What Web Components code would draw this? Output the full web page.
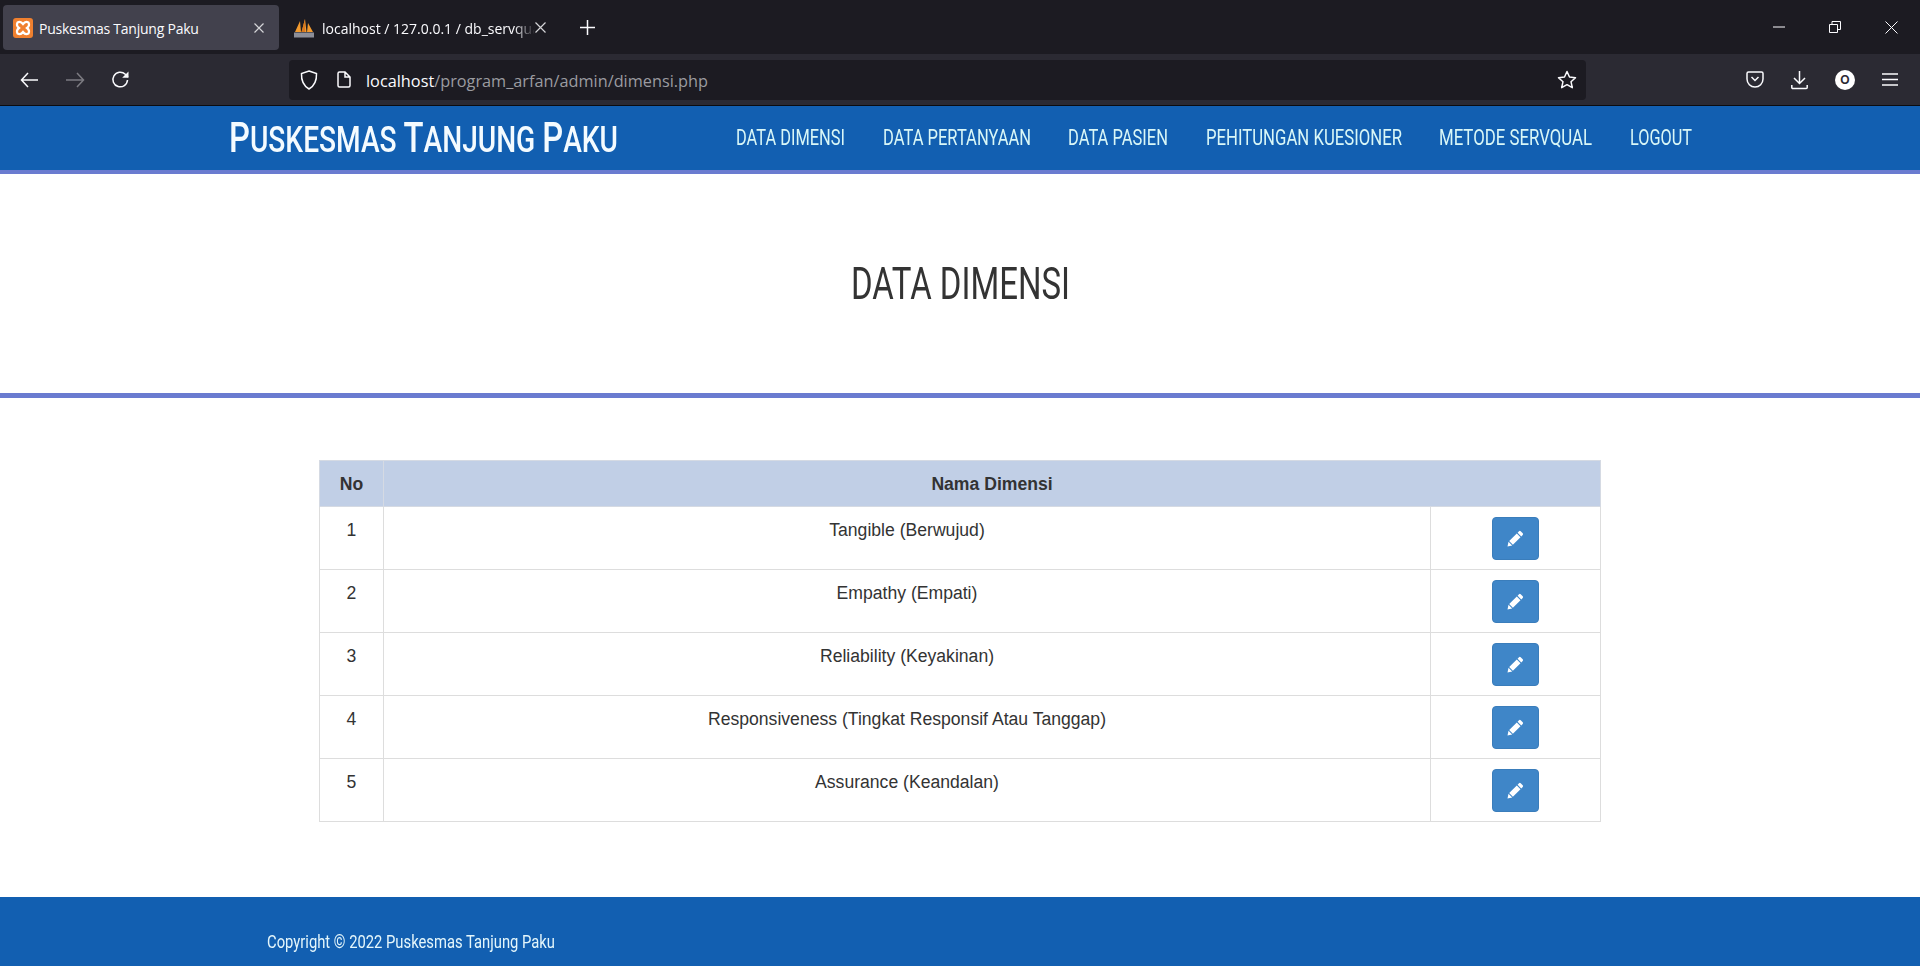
<!DOCTYPE html>
<html>
<head>
<meta charset="utf-8">
<title>Puskesmas Tanjung Paku</title>
<style>
  html,body{margin:0;height:973px;overflow:hidden;background:#fff}
  body{display:flex;flex-direction:column}
</style>
</head>
<body>
<browser-chrome></browser-chrome>
<site-header></site-header>
<page-title>DATA DIMENSI</page-title>
<dimensi-table></dimensi-table>
<site-footer>Copyright © 2022 Puskesmas Tanjung Paku</site-footer>

<script>
// no condensed font here, so squeeze Roboto to the width given in w
class NarrowText extends HTMLElement{
  connectedCallback(){
    const shadowRoot = this.attachShadow({mode:'open'});
    shadowRoot.innerHTML = `
    <style>
      :host{display:inline-block;white-space:nowrap;font-family:Roboto,sans-serif}
      span{display:inline-block;transform-origin:0 0}
    </style>
    <span><slot></slot></span>`;
    const w = Number(this.getAttribute('w'));
    const span = shadowRoot.querySelector('span');
    const real = span.getBoundingClientRect().width;
    span.style.transform = `scaleX(${w/real})`;
    this.style.width = w+'px';
  }
}
customElements.define('narrow-text',NarrowText);

class BrowserChrome extends HTMLElement{
  connectedCallback(){
    const shadowRoot = this.attachShadow({mode:'open'});
    shadowRoot.innerHTML = `
    <style>
      :host{display:block;font-family:"Open Sans","Noto Sans",sans-serif;color:#fbfbfe}
      svg{display:block;fill:none;stroke:currentColor;stroke-width:1.5;flex:none}
      #tabs{height:54px;background:#1c1b22;display:flex;align-items:flex-start;padding:5px 0 0 3px;box-sizing:border-box}
      .tab{height:45px;display:flex;align-items:center;box-sizing:border-box;font-size:14px;white-space:nowrap}
      #t1{width:276px;background:#42414d;border-radius:4px;padding:0 15px 0 10px}
      #t2{width:267px;padding:0 0 0 15px}
      .label{margin:2px 0 0 6px;flex:1;overflow:hidden}
      #t1 .label{letter-spacing:-.23px}
      #t2 .label{margin-left:8px;-webkit-mask-image:linear-gradient(90deg,#000 90%,transparent);mask-image:linear-gradient(90deg,#000 90%,transparent)}
      #plus{margin-left:34px}
      #win{margin-left:auto;display:flex;align-items:center;height:44px;padding-right:22px;gap:44px}
      #nav{height:51px;background:#2b2a33;display:flex;align-items:center;box-sizing:border-box;padding-left:20px}
      #back{display:flex;gap:26px;align-items:center;width:269px}
      #url{width:1297px;height:40px;background:#1c1b22;border-radius:4px;display:flex;align-items:center;padding:0 9px 0 11px;box-sizing:border-box;font-size:16.3px}
      #addr{margin:2px 0 0 15px;color:#9b9ba0;flex:1;white-space:nowrap}
      #addr b{font-weight:400;color:#fbfbfe}
      #right{display:flex;align-items:center;gap:27px;margin-left:160px}
      #avatar{width:20px;height:20px;border-radius:50%;background:#fff;display:flex;align-items:center;justify-content:center;color:#2b2a33;font:700 12px "Liberation Sans",sans-serif}
      #rule{height:1px;background:#0c0c10}
    </style>
    <div id="tabs">
      <div class="tab" id="t1">
        <svg width="20" height="20" viewBox="0 0 20 20" style="stroke:none"><rect width="20" height="20" rx="3" fill="#f0802f"/><path d="M4.500 4.500c2-1 4-.5 5.500 1.500 1.500-2 3.500-2.500 5.500-1.500 1 2 .5 4-1.500 5.500 2 1.500 2.500 3.500 1.500 5.500-2 1-4 .5-5.500-1.500-1.500 2-3.500 2.500-5.500 1.500-1-2-.5-4 1.500-5.500-2-1.500-2.500-3.500-1.500-5.500z" fill="none" stroke="#fff" stroke-width="2.200"/></svg>
        <span class="label">Puskesmas Tanjung Paku</span>
        <svg width="10" height="10" viewBox="0 0 10 10" style="color:#d5d5d8;stroke-width:1.200"><path d="M.5.500l9 9M9.500.500l-9 9"/></svg>
      </div>
      <div class="tab" id="t2">
        <svg width="20" height="20" viewBox="0 0 20 20" style="stroke:none"><path d="M1 14L6 3l1 11zM7.500 14L11 1l1.500 13zM13 14l1-9 5 9z" fill="#f29a2e"/><path d="M7.500 14L11 1v13z" fill="#d9791e"/><rect x="0" y="14.500" width="20" height="5" fill="#8c8e98"/></svg>
        <span class="label">localhost / 127.0.0.1 / db_servqual</span>
        <svg width="11" height="11" viewBox="0 0 11 11" style="color:#d5d5d8;stroke-width:1.200"><path d="M.5.500l10 10M10.500.500l-10 10"/></svg>
      </div>
      <div class="tab" id="plus"><svg width="15" height="15" viewBox="0 0 15 15"><path d="M7.500 0v15M0 7.500h15"/></svg></div>
      <div id="win">
        <svg width="12" height="12" viewBox="0 0 12 12" style="stroke-width:1"><path d="M0 6h12"/></svg>
        <svg width="12" height="12" viewBox="0 0 12 12" style="stroke-width:1"><path d="M.5 3.500h8v8h-8zM3 3.500v-3h8.500v8h-3"/></svg>
        <svg width="13" height="13" viewBox="0 0 13 13" style="stroke-width:1"><path d="M.5.500l12 12M12.500.500l-12 12"/></svg>
      </div>
    </div>
    <div id="nav">
      <div id="back">
        <svg width="19" height="16" viewBox="0 0 19 16"><path d="M18 8H1.500M8 1L1.500 8 8 15"/></svg>
        <svg width="20" height="16" viewBox="0 0 20 16" style="color:#7c7b82"><path d="M1 8h17.500M12 1l6.500 7L12 15"/></svg>
        <svg width="19" height="19" viewBox="0 0 19 19"><path d="M16.500 10A7.300 7.300 0 1 1 14.300 4.300L17 7"/><path d="M17.500 1.500v6.300h-6.300z" fill="#fbfbfe" stroke="none"/></svg>
      </div>
      <div id="url">
        <svg width="18" height="20" viewBox="0 0 18 20"><path d="M9 1l7.500 2.500c.3 6.500-1.500 12-7.500 15.500C3 15.500 1.200 10 1.500 3.500z"/></svg>
        <svg width="14" height="17" viewBox="0 0 14 17" style="margin-left:19px"><path d="M2.500 1H8l5 5v8.500a1.500 1.500 0 0 1-1.500 1.500h-9A1.500 1.500 0 0 1 1 14.500v-12A1.500 1.500 0 0 1 2.500 1zM8 1v5h5"/></svg>
        <span id="addr"><b>localhost</b>/program_arfan/admin/dimensi.php</span>
        <svg width="20" height="20" viewBox="0 0 20 20"><path d="M10 1.500l2.500 5.500 6 .7-4.500 4 1.300 6L10 14.700 4.700 17.700 6 11.700l-4.500-4 6-.7z" stroke-linejoin="round"/></svg>
      </div>
      <div id="right">
        <svg width="18" height="17" viewBox="0 0 18 17"><path d="M2.500 1h13A1.500 1.500 0 0 1 17 2.500V8a8 8 0 0 1-16 0V2.500A1.500 1.500 0 0 1 2.500 1zM5.500 6L9 9.500 12.500 6"/></svg>
        <svg width="17" height="20" viewBox="0 0 17 20"><path d="M8.500 1v12M3 8l5.500 5.500L14 8M.8 15v2.500a1 1 0 0 0 1 1h13.400a1 1 0 0 0 1-1V15"/></svg>
        <div id="avatar">O</div>
        <svg width="16" height="13" viewBox="0 0 16 13"><path d="M0 1h16M0 6.500h16M0 12h16"/></svg>
      </div>
    </div>
    <div id="rule"></div>
    `;
  }
}
customElements.define('browser-chrome',BrowserChrome);

class SiteHeader extends HTMLElement{
  connectedCallback(){
    const shadowRoot = this.attachShadow({mode:'open'});
    const items = [['DATA DIMENSI',109],['DATA PERTANYAAN',148],['DATA PASIEN',100],['PEHITUNGAN KUESIONER',196],['METODE SERVQUAL',153],['LOGOUT',62]];
    shadowRoot.innerHTML = `
    <style>
      :host{display:block;background:#125fb1;border-bottom:4px solid #6a7bd0;height:64px;color:#fff}
      #in{display:flex;align-items:center;height:64px;padding-left:229px}
      #brand{width:507px;line-height:1;color:#f4fbff}
      #brand narrow-text{font-size:36px;font-weight:500;text-transform:uppercase}
      #brand b{font-size:42px;font-weight:500}
      nav{display:flex;gap:37.6px}
      a{font-size:22px;color:#d9f7f7}
    </style>
    <div id="in">
      <div id="brand"><narrow-text w="389"><b>P</b>uskesmas <b>T</b>anjung <b>P</b>aku</narrow-text></div>
      <nav>${items.map(i=>`<a><narrow-text w="${i[1]}">${i[0]}</narrow-text></a>`).join('')}</nav>
    </div>`;
  }
}
customElements.define('site-header',SiteHeader);

class PageTitle extends HTMLElement{
  connectedCallback(){
    const shadowRoot = this.attachShadow({mode:'open'});
    shadowRoot.innerHTML = `
    <style>
      :host{display:flex;height:219px;align-items:center;justify-content:center;border-bottom:5px solid #6a7bd0;font-size:44px;color:#333}
    </style>
    <div><narrow-text w="219"><slot></slot></narrow-text></div>`;
  }
}
customElements.define('page-title',PageTitle);

class DimensiTable extends HTMLElement{
  connectedCallback(){
    const shadowRoot = this.attachShadow({mode:'open'});
    const rows = ['Tangible (Berwujud)','Empathy (Empati)','Reliability (Keyakinan)','Responsiveness (Tingkat Responsif Atau Tanggap)','Assurance (Keandalan)'];
    const pencil = `<svg width="17" height="17" viewBox="0 0 17 17"><path fill="#fff" d="M12 1.300a1.200 1.200 0 0 1 1.700 0l2 2a1.200 1.200 0 0 1 0 1.700l-1.400 1.400-3.700-3.700zM9.800 3.500l3.700 3.700-7.600 7.600-3.700-3.700zM1.500 11.800l3.700 3.700-4.700 1z"/></svg>`;
    shadowRoot.innerHTML = `
    <style>
      :host{display:block;padding:62px 319px 0 319px;height:499px;box-sizing:border-box;font:17.6px "Liberation Sans",Arial,sans-serif;color:#333}
      table{border-collapse:collapse;width:1281px;table-layout:fixed}
      th,td{border:1px solid #ddd;text-align:center;vertical-align:top;padding:0}
      th{background:#c1cfe6;font-weight:700;height:46px;box-sizing:border-box;padding-top:2px;vertical-align:middle;border-color:#d5dae3}
      td{height:63px;padding-top:13px;box-sizing:border-box;line-height:20px}
      td.act{padding-top:10px}
      button{width:47px;height:43px;background:#3f86c8;border:1px solid #3a7dbb;border-radius:4px;display:inline-flex;align-items:center;justify-content:center;padding:0;vertical-align:top}
    </style>
    <table>
      <colgroup><col style="width:64px"><col style="width:1047px"><col style="width:170px"></colgroup>
      <tr><th>No</th><th colspan="2">Nama Dimensi</th></tr>
      ${rows.map((r,i)=>`<tr><td>${i+1}</td><td>${r}</td><td class="act"><button>${pencil}</button></td></tr>`).join('')}
    </table>`;
  }
}
customElements.define('dimensi-table',DimensiTable);

class SiteFooter extends HTMLElement{
  connectedCallback(){
    const shadowRoot = this.attachShadow({mode:'open'});
    shadowRoot.innerHTML = `
    <style>
      :host{display:flex;align-items:flex-end;height:69px;background:#125fb1;color:#e4f6fb;font-size:18px;padding:0 0 14px 267px;box-sizing:border-box}
    </style>
    <narrow-text w="288"><slot></slot></narrow-text>`;
  }
}
customElements.define('site-footer',SiteFooter);
</script>
</body>
</html>
